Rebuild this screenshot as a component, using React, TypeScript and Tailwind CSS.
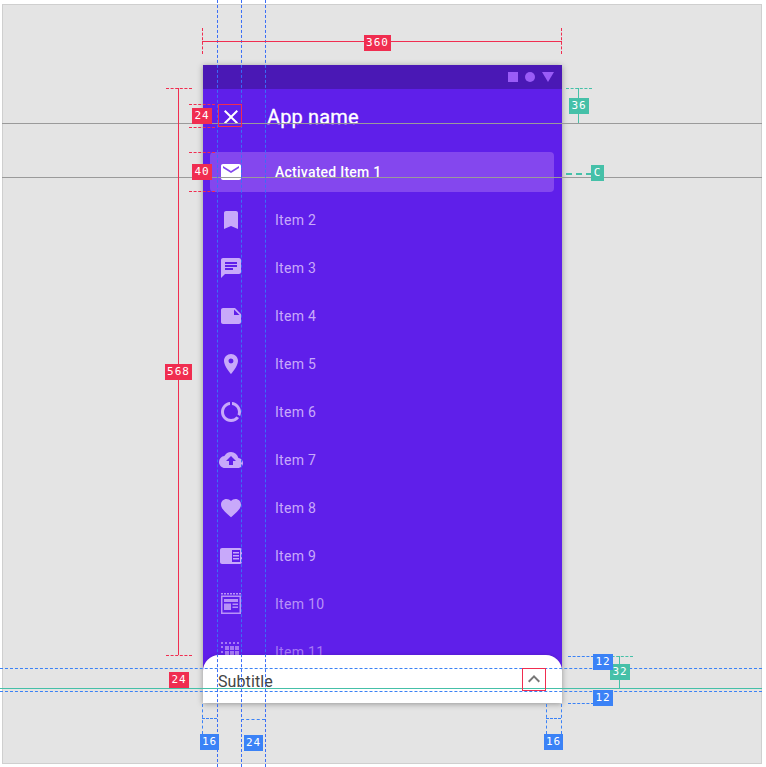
import React from "react";
import { MdClose, MdMail, MdBookmark, MdChat, MdNote, MdPlace, MdDataUsage, MdCloudUpload, MdFavorite, MdKeyboardArrowUp } from "react-icons/md";

const ReaderIcon = () => (
  <svg width="24" height="24" viewBox="0 0 24 24" fill="currentColor">
    <path d="M3 4h18c1.100 0 2 .9 2 2v12c0 1.100-.9 2-2 2H3c-1.100 0-2-.9-2-2V6c0-1.100.9-2 2-2zm10 2v12h8V6h-8zm1 2h6v1.500h-6V8zm0 3h6v1.500h-6V11zm0 3h6v1.500h-6V14z" fillRule="evenodd" />
  </svg>
);

const CalendarIcon = () => (
  <svg width="24" height="24" viewBox="0 0 24 24" fill="currentColor">
    <path d="M2 1h2v1.500H2zM5 1h2v1.500H5zM8 1h2v1.500H8zM11 1h2v1.500h-2zM14 1h2v1.500h-2zM17 1h2v1.500h-2zM20 1h2v1.500h-2z" />
    <path d="M2 3.500h20V22H2V3.500zM3.500 5v15.500h17V5h-17zM5 7h14v3H5V7zm0 4.500h7V18H5v-6.500zm8.500 0H19V13h-5.500v-1.500zm0 3H19V16h-5.500v-1.500z" fillRule="evenodd" />
  </svg>
);

const GridIcon = () => (
  <svg width="24" height="24" viewBox="0 0 24 24" fill="currentColor">
    <path d="M2 2h2v2H2zM6 2h2v2H6zM10 2h2v2h-2zM14 2h2v2h-2zM18 2h2v2h-2zM2 6h2v2H2zM6 6h4v4H6zM11 6h4v4h-4zM16 6h4v4h-4zM2 11h2v2H2zM6 11h4v4H6zM11 11h4v4h-4zM16 11h4v4h-4z" />
  </svg>
);

const items = [
  { label: "Item 2", Icon: MdBookmark, color: "text-[#c8a9fa]" },
  { label: "Item 3", Icon: MdChat, color: "text-[#c8a9fa]" },
  { label: "Item 4", Icon: MdNote, color: "text-[#c8a9fa]" },
  { label: "Item 5", Icon: MdPlace, color: "text-[#c8a9fa]" },
  { label: "Item 6", Icon: MdDataUsage, color: "text-[#c8a9fa]" },
  { label: "Item 7", Icon: MdCloudUpload, color: "text-[#c8a9fa]" },
  { label: "Item 8", Icon: MdFavorite, color: "text-[#c8a9fa]" },
  { label: "Item 9", Icon: ReaderIcon, color: "text-[#c8a9fa]" },
  { label: "Item 10", Icon: CalendarIcon, color: "text-[#b892f7]" },
  { label: "Item 11", Icon: GridIcon, color: "text-[#a578f4]" },
];

// measurement tag that sits over the mockup
const Tag = ({ text, color, className }: { text: string; color: string; className: string }) => (
  <div className={`absolute flex h-4 items-center justify-center text-[11px] tracking-[1px] text-white ${color} ${className}`} style={{ fontFamily: "'DejaVu Sans Mono', monospace" }}>
    {text}
  </div>
);

const App = () => {
  return (
    <div className="relative h-[767px] w-[766px] overflow-hidden bg-white pb-[3px] pl-[2px] pr-[4px] pt-[4px]" style={{ fontFamily: "Roboto, sans-serif" }}>
      <div className="h-[760px] w-[760px] border border-[#cfcfcf] bg-[#e4e4e4] pl-[200px] pt-[60px]">
        <div className="relative flex h-[638px] w-[359px] flex-col overflow-hidden bg-[#5f1fea] shadow-[0_1px_6px_rgba(0,0,0,0.35)]">
          <div className="flex h-6 shrink-0 items-center justify-end gap-[7px] bg-[#4a18b5] pr-2">
            <div className="h-[10px] w-[10px] bg-[#9a5cf7]" />
            <div className="h-[10px] w-[10px] rounded-full bg-[#9a5cf7]" />
            <svg width="12" height="10" viewBox="0 0 12 10"><path d="M0 0h12L6 10z" fill="#9a5cf7" /></svg>
          </div>
          <div className="flex h-14 shrink-0 items-center pl-4 text-white">
            <MdClose size={24} />
            <span className="ml-6 text-[20px] font-normal leading-6 tracking-[0.15px] [-webkit-text-stroke:0.3px_white]">App name</span>
          </div>
          <div className="flex flex-1 flex-col gap-2 overflow-hidden pl-[7px] pr-2 pt-[7px]">
            <div className="flex h-10 shrink-0 items-center rounded bg-[#8447ee] pl-[9px] pr-2 text-white">
              <MdMail size={24} />
              <span className="ml-8 text-sm font-medium tracking-[0.25px]">Activated Item 1</span>
            </div>
            {items.map(({ label, Icon, color }) => (
              <div key={label} className={`flex h-10 shrink-0 items-center pl-[9px] pr-2 ${color}`}>
                <Icon size={24} />
                <span className="ml-8 text-sm tracking-[0.3px]">{label}</span>
              </div>
            ))}
          </div>
          <div className="absolute bottom-0 left-0 right-0 flex h-12 items-center justify-between rounded-t-2xl bg-white pl-[15px] pr-4 pt-[6px] shadow-[0_-1px_3px_rgba(0,0,0,0.1)]">
            <span className="text-base tracking-[0.1px] text-[#444]">Subtitle</span>
            <MdKeyboardArrowUp size={24} className="-mt-[6px] text-[#777]" />
          </div>
        </div>
      </div>

      {/* redlines */}
      <div className="pointer-events-none absolute inset-0">
        <div className="absolute left-[2px] top-[123px] h-px w-[760px] bg-[#9a9a9a]" />
        <div className="absolute left-[2px] top-[177px] h-px w-[760px] bg-[#9a9a9a]" />
        <div className="absolute left-0 top-[688px] h-px w-[762px] bg-[#45c0a8]" />
        <div className="absolute left-0 top-[668px] w-[762px] border-t border-dashed border-[#3b82f6]" />
        <div className="absolute left-0 top-[691px] w-[762px] border-t border-dashed border-[#3b82f6]" />
        <div className="absolute left-[217px] top-0 h-[767px] border-l border-dashed border-[#3b6ef6]" />
        <div className="absolute left-[241px] top-0 h-[767px] border-l border-dashed border-[#3b6ef6]" />
        <div className="absolute left-[265px] top-0 h-[767px] border-l border-dashed border-[#3b6ef6]" />
        <div className="absolute left-[202px] top-[41px] h-px w-[360px] bg-[#f02d50]" />
        <div className="absolute left-[202px] top-[28px] h-[26px] border-l border-dashed border-[#f02d50]" />
        <div className="absolute left-[561px] top-[28px] h-[26px] border-l border-dashed border-[#f02d50]" />
        <div className="absolute left-[178px] top-[88px] h-[567px] w-px bg-[#f02d50]" />
        <div className="absolute left-[166px] top-[88px] w-[26px] border-t border-dashed border-[#f02d50]" />
        <div className="absolute left-[166px] top-[655px] w-[26px] border-t border-dashed border-[#f02d50]" />
        <div className="absolute left-[189px] top-[104px] w-[26px] border-t border-dashed border-[#f02d50]" />
        <div className="absolute left-[189px] top-[127px] w-[26px] border-t border-dashed border-[#f02d50]" />
        <div className="absolute left-[189px] top-[152px] w-[26px] border-t border-dashed border-[#f02d50]" />
        <div className="absolute left-[189px] top-[191px] w-[26px] border-t border-dashed border-[#f02d50]" />
        <div className="absolute left-[218px] top-[104px] h-[23px] w-[24px] border border-[#f02d50]" />
        <div className="absolute left-[522px] top-[668px] h-[23px] w-[24px] border border-[#f02d50]" />
        <div className="absolute left-[578px] top-[88px] h-[35px] w-px bg-[#45c0a8]" />
        <div className="absolute left-[566px] top-[88px] w-[26px] border-t border-dashed border-[#45c0a8]" />
        <div className="absolute left-[566px] top-[173px] w-[26px] border-t-2 border-dashed border-[#45c0a8]" />
        <div className="absolute left-[568px] top-[656px] w-[26px] border-t border-dashed border-[#3b82f6]" />
        <div className="absolute left-[568px] top-[703px] w-[26px] border-t border-dashed border-[#3b82f6]" />
        <div className="absolute left-[607px] top-[656px] w-[26px] border-t border-dashed border-[#45c0a8]" />
        <div className="absolute left-[619px] top-[656px] h-[32px] w-px bg-[#45c0a8]" />
        <div className="absolute left-[202px] top-[704px] h-[30px] border-l border-dashed border-[#3b82f6]" />
        <div className="absolute left-[202px] top-[718px] w-[15px] border-t border-dashed border-[#3b82f6]" />
        <div className="absolute left-[241px] top-[719px] w-[24px] border-t border-dashed border-[#3b82f6]" />
        <div className="absolute left-[546px] top-[704px] h-[30px] border-l border-dashed border-[#3b82f6]" />
        <div className="absolute left-[561px] top-[704px] h-[30px] border-l border-dashed border-[#3b82f6]" />
        <div className="absolute left-[546px] top-[718px] w-[15px] border-t border-dashed border-[#3b82f6]" />
        <Tag text="360" color="bg-[#f02d50]" className="left-[364px] top-[35px] w-[27px]" />
        <Tag text="24" color="bg-[#f02d50]" className="left-[192px] top-[108px] w-[20px]" />
        <Tag text="40" color="bg-[#f02d50]" className="left-[192px] top-[164px] w-[20px]" />
        <Tag text="568" color="bg-[#f02d50]" className="left-[165px] top-[364px] w-[27px]" />
        <Tag text="24" color="bg-[#f02d50]" className="left-[169px] top-[672px] w-[20px]" />
        <Tag text="36" color="bg-[#45c0a8]" className="left-[569px] top-[98px] w-[20px]" />
        <Tag text="C" color="bg-[#45c0a8]" className="left-[591px] top-[165px] w-[13px]" />
        <Tag text="32" color="bg-[#45c0a8]" className="left-[610px] top-[664px] w-[20px]" />
        <Tag text="12" color="bg-[#3b82f6]" className="left-[593px] top-[654px] w-[20px]" />
        <Tag text="12" color="bg-[#3b82f6]" className="left-[593px] top-[690px] w-[20px]" />
        <Tag text="16" color="bg-[#3b82f6]" className="left-[200px] top-[734px] w-[19px]" />
        <Tag text="24" color="bg-[#3b82f6]" className="left-[244px] top-[735px] w-[19px]" />
        <Tag text="16" color="bg-[#3b82f6]" className="left-[544px] top-[734px] w-[19px]" />
      </div>
    </div>
  );
};

export default App;
